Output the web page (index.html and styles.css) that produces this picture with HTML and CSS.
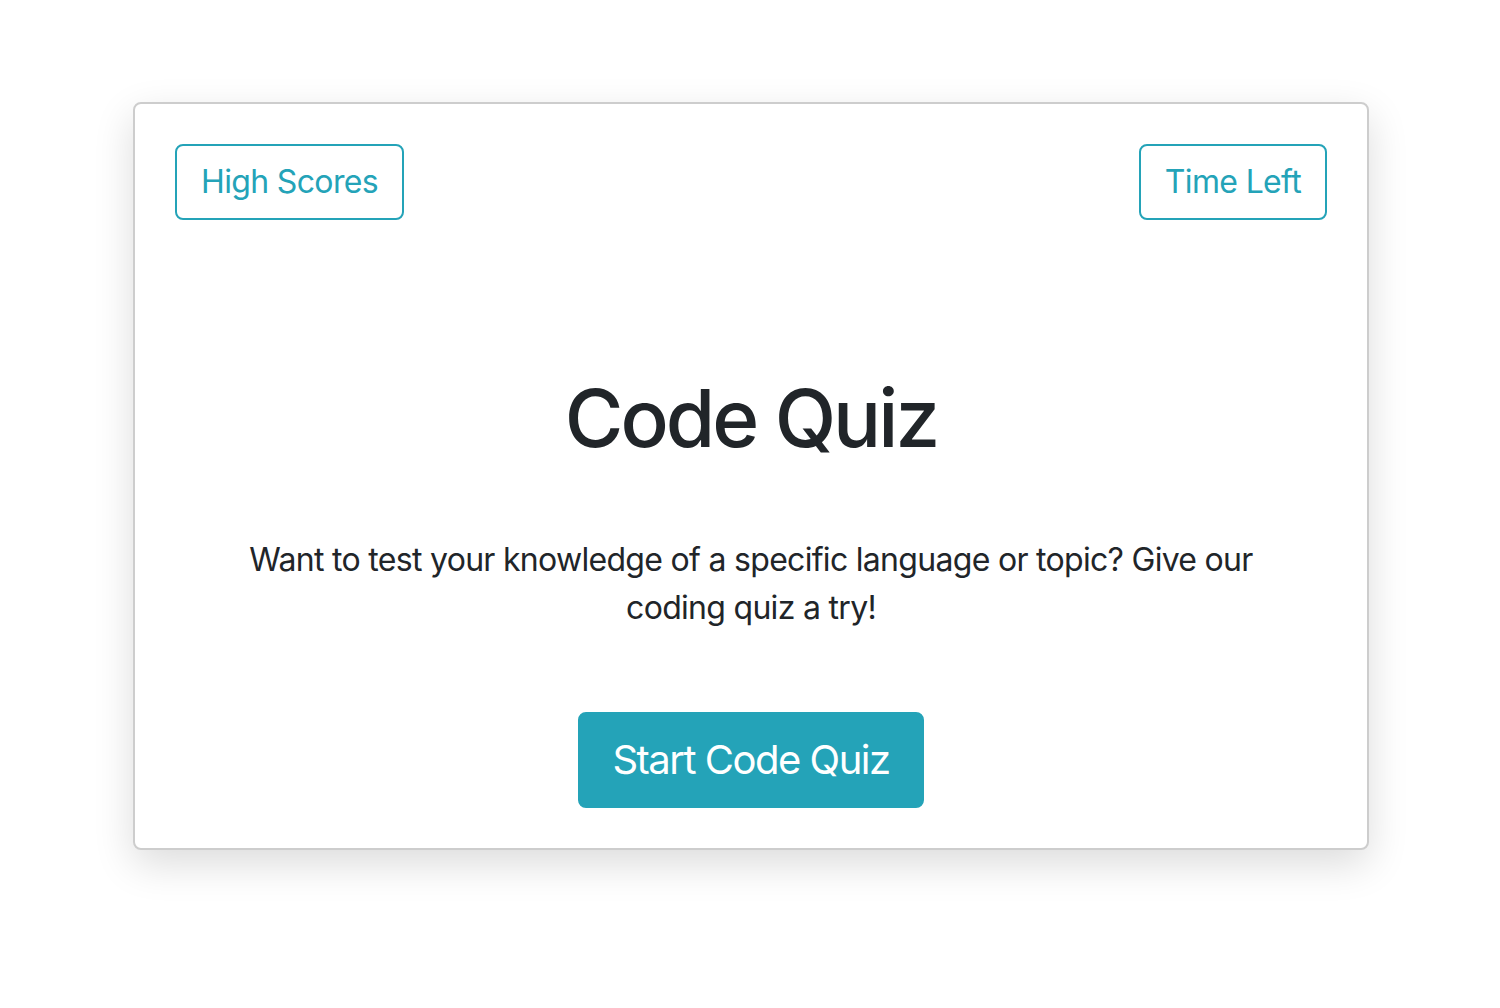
FILE: index.html
```html
<!DOCTYPE html>
<html lang="en">
<head>
<meta charset="utf-8">
<title>Code Quiz</title>
<link rel="stylesheet" href="styles.css">
</head>
<body>
<main class="page">
  <section class="card">
    <div class="card-top">
      <button class="btn btn-outline">High Scores</button>
      <button class="btn btn-outline">Time Left</button>
    </div>
    <h1 class="title">Code Quiz</h1>
    <p class="lead">Want to test your knowledge of a specific language or topic? Give our coding quiz a try!</p>
    <div class="actions">
      <button class="btn btn-lg btn-info">Start Code Quiz</button>
    </div>
  </section>
</main>
</body>
</html>
```

FILE: styles.css
```css
* { box-sizing: border-box; }
html, body { margin: 0; padding: 0; background: #fff; }
body {
  font-family: Inter, "Noto Sans", "Liberation Sans", sans-serif;
  color: #212529;
}
.page {
  padding: 102px 131px 160px 133px;
}
.card {
  border: 2px solid #cdcdcd;
  border-radius: 8px;
  background: #fff;
  padding: 40px;
  box-shadow: 0 14px 40px rgba(0, 0, 0, 0.14);
}
.card-top {
  display: flex;
  justify-content: space-between;
}
.btn {
  font-family: inherit;
  font-size: 32px;
  line-height: 48px;
  padding: 12px 24px;
  border: 2px solid #24a3b8;
  border-radius: 8px;
  background: #fff;
  color: #24a3b8;
  letter-spacing: -0.65px;
  cursor: pointer;
}
.btn-lg {
  font-size: 40px;
  line-height: 60px;
  padding: 16px 32px;
  letter-spacing: -1.5px;
}
.btn-info {
  background: #24a3b8;
  color: #fff;
}
.title {
  margin: 150px 0 70px;
  font-size: 80px;
  line-height: 96px;
  font-weight: 500;
  text-align: center;
  letter-spacing: -3px;
}
.lead {
  margin: 0 auto 80px;
  max-width: 1060px;
  font-size: 32px;
  line-height: 48px;
  text-align: center;
  letter-spacing: -0.7px;
}
.actions {
  display: flex;
  justify-content: center;
}
```
